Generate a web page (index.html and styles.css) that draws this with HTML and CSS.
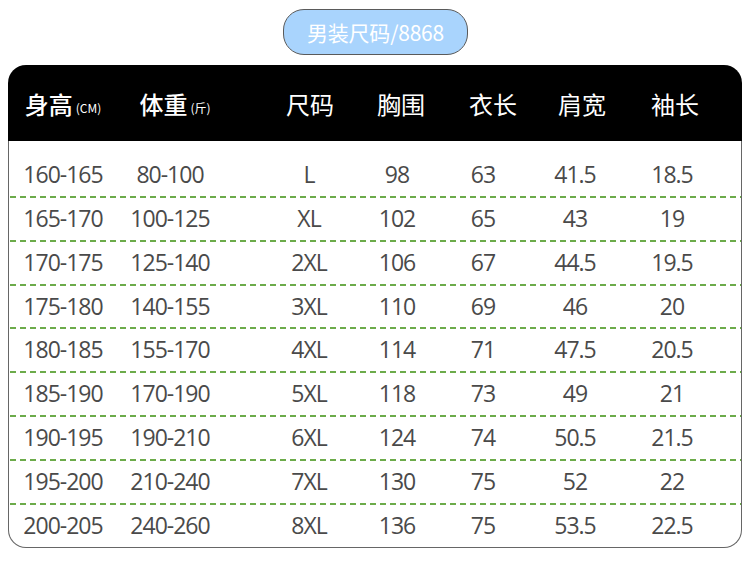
FILE: index.html
```html
<!DOCTYPE html>
<html lang="zh-CN">
<head>
<meta charset="utf-8">
<title>男装尺码/8868</title>
<link rel="stylesheet" href="styles.css">
</head>
<body>
<div class="page">
  <div class="title-wrap"><div class="pill">男装尺码/8868</div></div>
  <div class="chart">
    <div class="head">
      <div class="hc strong">身高<small>(CM)</small></div>
      <div class="hc strong">体重<small>(斤)</small></div>
      <div class="hc c3">尺码</div>
      <div class="hc">胸围</div>
      <div class="hc">衣长</div>
      <div class="hc">肩宽</div>
      <div class="hc">袖长</div>
    </div>
    <div class="body">
      <div class="row"><span>160-165</span><span>80-100</span><span>L</span><span>98</span><span>63</span><span>41.5</span><span>18.5</span></div>
      <div class="row"><span>165-170</span><span>100-125</span><span>XL</span><span>102</span><span>65</span><span>43</span><span>19</span></div>
      <div class="row"><span>170-175</span><span>125-140</span><span>2XL</span><span>106</span><span>67</span><span>44.5</span><span>19.5</span></div>
      <div class="row"><span>175-180</span><span>140-155</span><span>3XL</span><span>110</span><span>69</span><span>46</span><span>20</span></div>
      <div class="row"><span>180-185</span><span>155-170</span><span>4XL</span><span>114</span><span>71</span><span>47.5</span><span>20.5</span></div>
      <div class="row"><span>185-190</span><span>170-190</span><span>5XL</span><span>118</span><span>73</span><span>49</span><span>21</span></div>
      <div class="row"><span>190-195</span><span>190-210</span><span>6XL</span><span>124</span><span>74</span><span>50.5</span><span>21.5</span></div>
      <div class="row"><span>195-200</span><span>210-240</span><span>7XL</span><span>130</span><span>75</span><span>52</span><span>22</span></div>
      <div class="row"><span>200-205</span><span>240-260</span><span>8XL</span><span>136</span><span>75</span><span>53.5</span><span>22.5</span></div>
    </div>
  </div>
</div>
</body>
</html>
```

FILE: styles.css
```css
* { box-sizing: border-box; }
html, body { margin: 0; padding: 0; background: #fff; }
body {
  width: 750px;
  height: 569px;
  overflow: hidden;
  font-family: "Noto Sans CJK SC", "Open Sans", sans-serif;
}
.page { padding: 9px 8px 0 8px; }
.title-wrap { display: flex; justify-content: center; padding-left: 1px; }
.pill {
  width: 185px;
  height: 46px;
  border: 1.5px solid #5a5a5a;
  border-radius: 21px;
  background: #a9d4fd;
  color: #fff;
  font-size: 21px;
  display: flex;
  align-items: center;
  justify-content: center;
  letter-spacing: -0.2px;
}
.chart {
  margin-top: 10px;
  width: 734px;
}
.head {
  height: 76px;
  background: #000;
  border-radius: 18px 18px 0 0;
  display: grid;
  grid-template-columns: 108px 116px 33px 88px 94px 90px 88px 98px;
  align-items: center;
  padding-left: 1px;
  color: #fff;
}
.hc {
  font-size: 24px;
  text-align: center;
  white-space: nowrap;
}
.hc.c3 { grid-column: 4; }
.hc.strong { font-weight: 500; }
.hc small {
  font-size: 12px;
  font-weight: 400;
  margin-left: 3px;
  vertical-align: 1px;
}
.body {
  border: 1.5px solid #666;
  border-top: 0;
  border-radius: 0 0 18px 18px;
  padding-top: 11px;
  padding-bottom: 0;
}
.row {
  height: 43.86px;
  display: grid;
  grid-template-columns: 108px 106px 43px 86px 90px 82px 102px 92px;
  align-items: center;
  font-family: "Open Sans", sans-serif;
  font-size: 23px;
  letter-spacing: -1px;
  color: #4a4a4a;
}
.row + .row {
  background-image: linear-gradient(to right, #6cab4a 0, #6cab4a 60%, transparent 60%);
  background-size: 10px 1.5px;
  background-repeat: repeat-x;
  background-position: 1px 0;
}
.row span { text-align: center; white-space: nowrap; }
.row span:nth-child(3) { grid-column: 4; }
```
